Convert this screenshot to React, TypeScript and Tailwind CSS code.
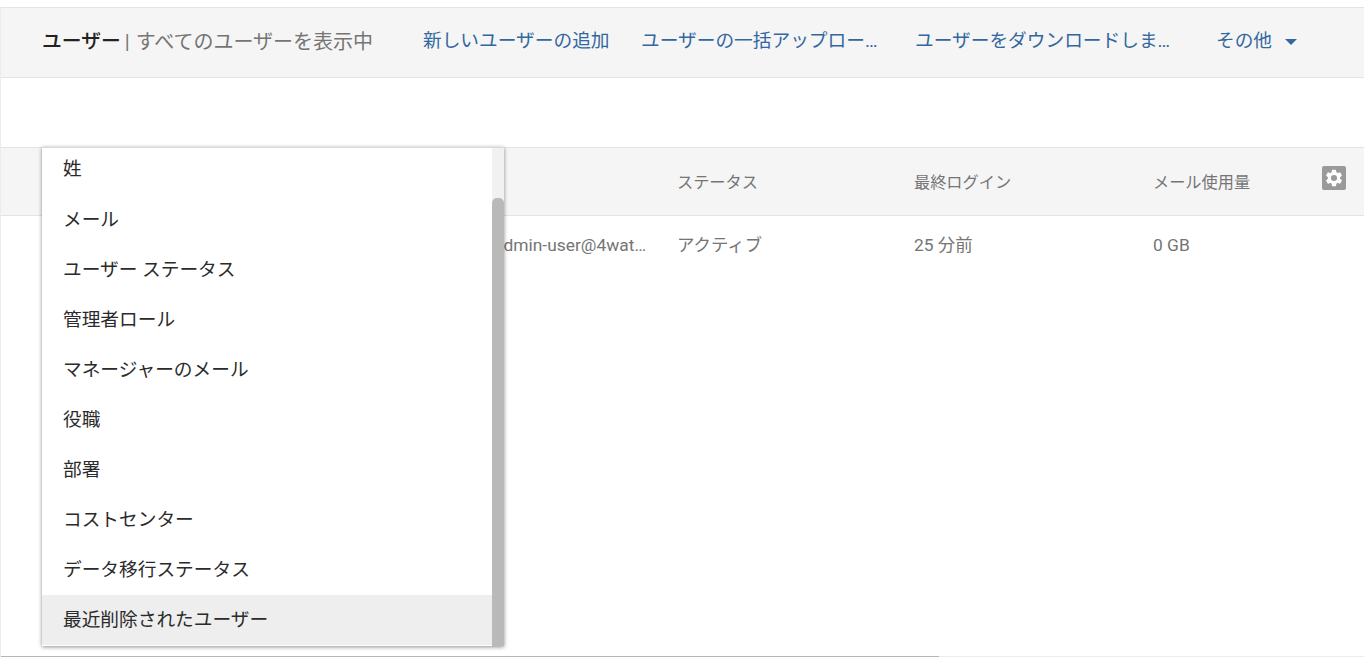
const menuItems = ['姓', 'メール', 'ユーザー ステータス', '管理者ロール', 'マネージャーのメール', '役職', '部署', 'コストセンター', 'データ移行ステータス', '最近削除されたユーザー'];

function Gear() {
  return (
    <svg width="24" height="24" viewBox="0 0 24 24" className="block">
      <rect x="0" y="0" width="24" height="24" rx="2" fill="#9a9a9a" />
      <path
        fill="#fff"
        transform="translate(1.8 1.8) scale(0.85)"
        d="M19.14 12.94c.04-.3.06-.61.06-.94s-.02-.64-.07-.94l2.03-1.58a.49.49 0 0 0 .12-.61l-1.92-3.32a.49.49 0 0 0-.59-.22l-2.39.96a7 7 0 0 0-1.62-.94l-.36-2.54a.48.48 0 0 0-.48-.41h-3.84a.48.48 0 0 0-.47.41l-.36 2.54c-.59.24-1.13.57-1.62.94l-2.39-.96a.48.48 0 0 0-.59.22L2.74 8.87a.48.48 0 0 0 .12.61l2.03 1.58c-.05.3-.09.63-.09.94s.02.64.07.94l-2.03 1.58a.49.49 0 0 0-.12.61l1.92 3.32c.12.22.37.29.59.22l2.39-.96c.5.38 1.03.7 1.62.94l.36 2.54c.05.24.24.41.48.41h3.84c.24 0 .44-.17.47-.41l.36-2.54c.59-.24 1.13-.56 1.62-.94l2.39.96c.22.08.47 0 .59-.22l1.92-3.32a.48.48 0 0 0-.12-.61l-2.01-1.58zM12 15.6A3.6 3.6 0 1 1 12 8.4a3.6 3.6 0 0 1 0 7.2z"
      />
    </svg>
  );
}

export default function App() {
  return (
    <div className="relative h-[657px] w-[1364px] overflow-hidden bg-white font-['Roboto','Noto_Sans_CJK_JP',sans-serif]">
      <div className="h-[7px] bg-white" />
      <div className="flex h-[71px] items-center border-y border-[#e4e4e4] bg-[#f5f5f5] pl-[42px] pb-[2px]">
        <div className="flex w-[381px] shrink-0 items-center whitespace-nowrap text-[#757575]">
          <span className="text-[19.8px] font-medium text-[#222]">ユーザー</span>
          <span className="ml-[4px] text-[20px]">|</span>
          <span className="ml-[6px] text-[20px]">すべてのユーザーを表示中</span>
        </div>
        <div className="w-[218px] shrink-0 whitespace-nowrap text-[18.7px] text-[#33679f]">新しいユーザーの追加</div>
        <div className="w-[238px] shrink-0 truncate text-[18.7px] text-[#33679f]">ユーザーの一括アップロード</div>
        <div className="ml-[36px] w-[257px] shrink-0 truncate text-[18.7px] text-[#33679f]">ユーザーをダウンロードします</div>
        <div className="ml-[44px] whitespace-nowrap text-[18.7px] text-[#33679f]">その他</div>
        <div className="ml-[13px] h-0 w-0 border-x-[6px] border-t-[6px] border-x-transparent border-t-[#33679f]" />
      </div>
      <div className="h-[69px] bg-white" />
      <div className="flex h-[69px] items-center border-y border-[#e4e4e4] bg-[#f5f5f5] pt-[4px] text-[16.2px] text-[#757575]">
        <div className="w-[677px] shrink-0" />
        <div className="w-[237px] shrink-0">ステータス</div>
        <div className="w-[239px] shrink-0">最終ログイン</div>
        <div className="w-[169px] shrink-0">メール使用量</div>
        <div className="-mt-[11px]"><Gear /></div>
      </div>
      <div className="flex h-[58px] items-center text-[17.4px] text-[#757575]">
        <div className="ml-[494px] w-[183px] shrink-0 pr-[28px]"><div className="truncate">admin-user@4watch.example</div></div>
        <div className="w-[237px] shrink-0">アクティブ</div>
        <div className="w-[239px] shrink-0">25 分前</div>
        <div className="shrink-0">0 GB</div>
      </div>

      <div className="absolute top-[147px] left-[42px] flex h-[499px] w-[462px] overflow-hidden border-t border-[#d8d8d8] bg-white shadow-[0_1px_4px_rgba(0,0,0,0.45)]">
        <div className="w-[450px] shrink-0">
          {menuItems.map((item, i) => (
            <div
              key={item}
              className={
                'flex items-center px-[21px] text-[18.7px] whitespace-nowrap text-[#2b2b2b] ' +
                (i === 0 ? 'h-[47px] pb-[5px] ' : 'h-[50px] ') +
                (i === 9 ? 'bg-[#eeeeee]' : '')
              }
            >
              {item}
            </div>
          ))}
        </div>
        <div className="flex w-[12px] shrink-0 flex-col bg-[#f1f1f1]">
          <div className="h-[50px] shrink-0" />
          <div className="flex-1 rounded-t-[5px] bg-[#b9b9b9]" />
        </div>
      </div>

      <div className="absolute bottom-0 left-0 flex h-[1px] w-full">
        <div className="w-[939px] bg-[#b5b5b5]" />
        <div className="flex-1 bg-[#ececec]" />
      </div>
      <div className="absolute top-[7px] bottom-0 left-0 w-[1px] bg-[#ececec]" />
    </div>
  );
}
